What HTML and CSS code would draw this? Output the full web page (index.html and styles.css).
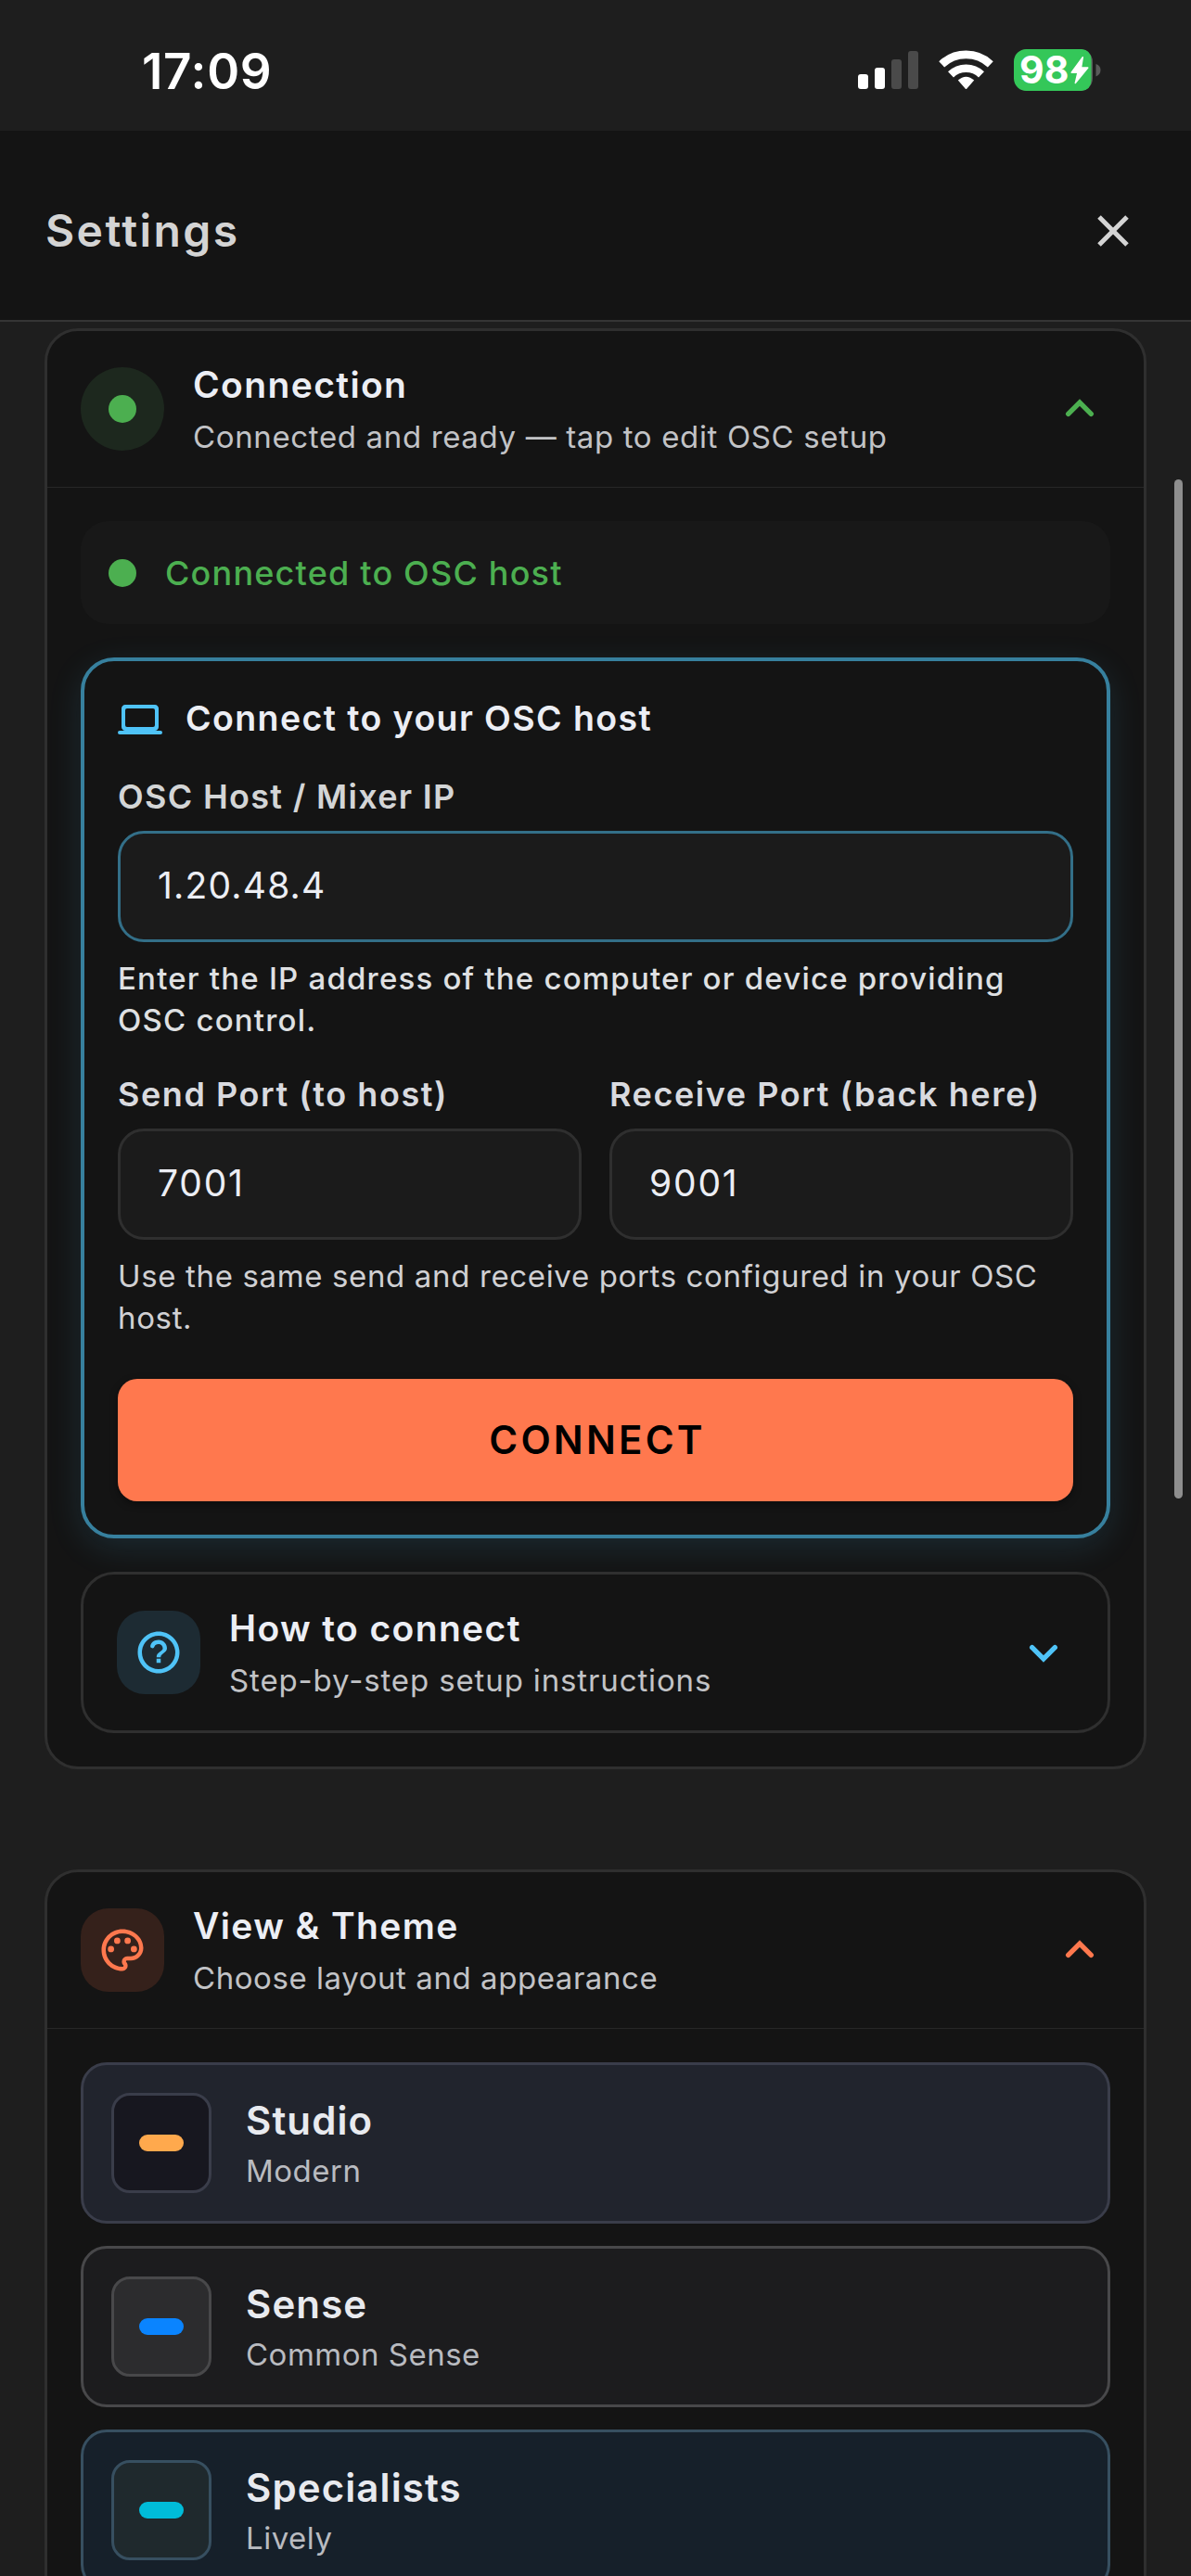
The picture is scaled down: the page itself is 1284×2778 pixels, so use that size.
FILE: index.html
```
<!DOCTYPE html>
<html lang="en">
<head>
    <meta charset="UTF-8">
    <meta name="viewport" content="width=device-width, initial-scale=1.0">
    <title>Settings</title>
    <link rel="stylesheet" href="styles.css">
</head>
<body>
    <div class="status-bar">
        <span class="time">17:09</span>
        <svg class="status-icons" width="270" height="60" viewBox="0 0 270 60">
            <!-- signal -->
            <rect x="5" y="35" width="11" height="16" rx="3" fill="#fff"/>
            <rect x="23" y="28" width="11" height="23" rx="3" fill="#fff"/>
            <rect x="41" y="19" width="11" height="32" rx="3" fill="#4a4a4a"/>
            <rect x="59" y="10" width="11" height="41" rx="3" fill="#4a4a4a"/>
            <!-- wifi -->
            <g fill="none" stroke="#fff">
                <path d="M95.2 24.3A38.5 38.5 0 0 1 147.8 24.3" stroke-width="8.6"/>
                <path d="M105 35.4A23.8 23.8 0 0 1 138 35.4" stroke-width="8.6"/>
            </g>
            <path d="M112.8 41.6Q121.5 34 130.2 41.6L122.4 50.4Q121.5 51.4 120.6 50.4Z" fill="#fff"/>
            <!-- battery -->
            <rect x="174" y="8" width="84" height="45" rx="13.5" fill="#5a5a5a"/>
            <path d="M187.5 8H246Q256 9 256.5 19V42Q256 52 246 53H187.5A13.5 13.5 0 0 1 173 39.5V21.5A13.5 13.5 0 0 1 187.5 8Z" fill="#34c759"/>
            <path d="M261.5 24Q266.5 25.5 266.5 30.5T261.5 37.5Z" fill="#5a5a5a"/>
            <text class="battery-text" x="179" y="45">98</text>
            <path d="M247.3 16.8L235.2 33.2H242L239.3 44.6L252.8 28H245.5Z" fill="#fff" stroke="#fff" stroke-width="1.5" stroke-linejoin="round"/>
        </svg>
    </div>

    <header class="header">
        <h1>Settings</h1>
        <svg class="close" width="36" height="36" viewBox="0 0 36 36">
            <path d="M3 3L33 33M33 3L3 33" stroke="#d4d4d4" stroke-width="5"/>
        </svg>
    </header>

    <main class="content">
        <section class="card">
            <div class="card-header">
                <div class="icon icon-round"><span class="dot"></span></div>
                <div class="card-text">
                    <h2>Connection</h2>
                    <p class="sub-connection">Connected and ready — tap to edit OSC setup</p>
                </div>
                <svg class="chevron green" width="66" height="66" viewBox="0 0 66 66"><path d="M20.7 38.3L33 26L45.3 38.3"/></svg>
            </div>
            <div class="card-body">
                <div class="status-row"><span class="dot"></span>Connected to OSC host</div>

                <div class="host-box">
                    <div class="host-title">
                        <svg width="48" height="48" viewBox="0 0 24 24" fill="#4fc3f7"><path d="M20 18c1.1 0 2-.9 2-2V6c0-1.1-.9-2-2-2H4c-1.1 0-2 .9-2 2v10c0 1.1.9 2 2 2H1a1 1 0 0 0 0 2h22a1 1 0 0 0 0-2h-3zM5 6h14a1 1 0 0 1 1 1v8a1 1 0 0 1-1 1H5a1 1 0 0 1-1-1V7a1 1 0 0 1 1-1z"/></svg>
                        <h3>Connect to your OSC host</h3>
                    </div>
                    <label class="label label-host">OSC Host / Mixer IP</label>
                    <div class="input input-active">1.20.48.4</div>
                    <p class="help help-strong">Enter the IP address of the computer or device providing OSC control.</p>
                    <div class="ports">
                        <div class="port">
                            <label class="label">Send Port (to host)</label>
                            <div class="input">7001</div>
                        </div>
                        <div class="port">
                            <label class="label">Receive Port (back here)</label>
                            <div class="input">9001</div>
                        </div>
                    </div>
                    <p class="help">Use the same send and receive ports configured in your OSC host.</p>
                    <div class="btn">CONNECT</div>
                </div>

                <div class="howto">
                    <div class="card-header">
                        <div class="icon icon-blue">
                            <svg width="54" height="54" viewBox="0 0 24 24" fill="#4fc3f7"><path d="M11 17h2v-2h-2v2zm1-15C6.48 2 2 6.48 2 12s4.48 10 10 10 10-4.48 10-10S17.52 2 12 2zm0 18c-4.41 0-8-3.59-8-8s3.59-8 8-8 8 3.59 8 8-3.59 8-8 8zm0-14c-2.21 0-3.6 1.3-3.9 2.7a.95.95 0 0 0 1.9.5c.3-.7.9-1.2 2-1.2s2 .9 2 2c0 1.6-3 1.7-3 4.3h2c0-1.9 3-2.1 3-4.3 0-2.210-1.790-4-4-4z"/></svg>
                        </div>
                        <div class="card-text">
                            <h2>How to connect</h2>
                            <p class="sub-howto">Step-by-step setup instructions</p>
                        </div>
                        <svg class="chevron blue" width="66" height="66" viewBox="0 0 66 66"><path d="M20.7 27.7L33 40L45.3 27.7"/></svg>
                    </div>
                </div>
            </div>
        </section>

        <section class="card">
            <div class="card-header">
                <div class="icon icon-orange">
                    <svg width="54" height="54" viewBox="0 0 24 24" fill="#ff784e"><path d="M12 22C6.49 22 2 17.51 2 12S6.49 2 12 2s10 4.04 10 9c0 3.31-2.69 6-6 6h-1.77c-.28 0-.5.22-.5.5 0 .12.05.23.13.33.41.47.64 1.06.64 1.67A2.5 2.5 0 0 1 12 22zm0-18c-4.41 0-8 3.59-8 8s3.59 8 8 8c.28 0 .5-.22.5-.5a.54.54 0 0 0-.14-.35c-.41-.46-.63-1.05-.63-1.65a2.5 2.5 0 0 1 2.5-2.5H16c2.21 0 4-1.79 4-4 0-3.86-3.59-7-8-7z"/><circle cx="6.5" cy="11.5" r="1.5"/><circle cx="9.5" cy="7.5" r="1.5"/><circle cx="14.5" cy="7.5" r="1.5"/><circle cx="17.5" cy="11.5" r="1.5"/></svg>
                </div>
                <div class="card-text">
                    <h2>View &amp; Theme</h2>
                    <p>Choose layout and appearance</p>
                </div>
                <svg class="chevron orange" width="66" height="66" viewBox="0 0 66 66"><path d="M20.7 38.3L33 26L45.3 38.3"/></svg>
            </div>
            <div class="card-body themes">
                <div class="theme theme-studio">
                    <div class="swatch"><span class="pill"></span></div>
                    <div class="theme-text">
                        <h3>Studio</h3>
                        <p>Modern</p>
                    </div>
                </div>
                <div class="theme theme-sense">
                    <div class="swatch"><span class="pill"></span></div>
                    <div class="theme-text">
                        <h3>Sense</h3>
                        <p>Common Sense</p>
                    </div>
                </div>
                <div class="theme theme-specialists">
                    <div class="swatch"><span class="pill"></span></div>
                    <div class="theme-text">
                        <h3>Specialists</h3>
                        <p>Lively</p>
                    </div>
                </div>
            </div>
        </section>
    </main>

    <div class="scrollbar"></div>
</body>
</html>
```
FILE: styles.css
```
* {
    box-sizing: border-box;
    margin: 0;
    padding: 0;
}
body {
    position: relative;
    width: 1284px;
    height: 2778px;
    overflow: hidden;
    background: #1e1e1e;
    color: #eceef4;
    font-family: Inter, "Liberation Sans", sans-serif;
}
.status-bar {
    display: flex;
    justify-content: space-between;
    height: 141px;
    padding: 45px 94px 0 153px;
}
.time {
    color: #fff;
    font-size: 53px;
    font-weight: 600;
    line-height: 64px;
    letter-spacing: 0.7px;
}
.battery-text {
    fill: #fff;
    font-size: 41px;
    font-weight: 700;
}
.header {
    display: flex;
    align-items: center;
    justify-content: space-between;
    height: 206px;
    padding: 12px 66px 0 49px;
    background: #141414;
    border-bottom: 2px solid #353535;
}
.header h1 {
    color: #d4d4d4;
    font-size: 48px;
    font-weight: 600;
    line-height: 60px;
    letter-spacing: 2.4px;
}
.content {
    display: flex;
    flex-direction: column;
    gap: 108px;
    padding: 7px 48px 0;
}
.card {
    flex: none;
    background: #141414;
    border: 3px solid #2f2f2f;
    border-radius: 36px;
}
.card-header {
    display: flex;
    align-items: center;
    gap: 31px;
    height: 168px;
    padding: 0 36px;
}
.icon {
    display: flex;
    align-items: center;
    justify-content: center;
    flex: none;
    width: 90px;
    height: 90px;
    border-radius: 30px;
}
.icon-round { background: #1d281e; border-radius: 50%; }
.icon-blue { background: #1d2b33; }
.icon-orange { background: #35211b; }
.dot {
    width: 30px;
    height: 30px;
    border-radius: 50%;
    background: #4caf50;
}
.card-text {
    flex: 1;
}
.card-text h2 {
    font-size: 39px;
    font-weight: 600;
    line-height: 52px;
    letter-spacing: 1.38px;
}
.card-text p {
    margin-top: 8px;
    color: #c2c3c6;
    font-size: 33px;
    line-height: 45px;
    letter-spacing: 0.56px;
}
.card-text .sub-connection { letter-spacing: 0.64px; }
.card-text .sub-howto { letter-spacing: 0.87px; }
.chevron {
    flex: none;
    fill: none;
    stroke-width: 5.4;
    stroke-linecap: round;
}
.green { stroke: #4caf50; }
.blue { stroke: #4fc3f7; }
.orange { stroke: #ff784e; }
.card-body {
    padding: 36px;
    border-top: 1px solid #272727;
}
.status-row {
    display: flex;
    align-items: center;
    gap: 31px;
    height: 111px;
    padding: 0 30px;
    border-radius: 30px;
    background: #181818;
    color: #4caf50;
    font-size: 36px;
    font-weight: 500;
    letter-spacing: 1.2px;
}
.host-box {
    margin-top: 36px;
    padding: 36px;
    background: #141414;
    border: 4px solid #37809e;
    border-radius: 36px;
    box-shadow: 0 10px 36px rgba(79, 195, 247, 0.13);
}
.host-title {
    display: flex;
    align-items: center;
    gap: 25px;
    height: 54px;
}
.host-title h3 {
    font-size: 37.5px;
    font-weight: 600;
    line-height: 50px;
    letter-spacing: 1.4px;
    padding-bottom: 2px;
}
.label {
    display: block;
    margin: 35px 0 15px;
    color: #d9dadf;
    font-size: 36px;
    font-weight: 600;
    line-height: 44px;
    letter-spacing: 1.55px;
}
.label-host {
    margin-top: 34px;
    color: #d3d5d6;
    letter-spacing: 1.3px;
}
.input {
    height: 120px;
    padding: 0 40px;
    background: #1b1b1b;
    border: 3px solid #2f2f2f;
    border-radius: 28px;
    font-size: 39px;
    line-height: 111px;
    letter-spacing: 1.8px;
}
.input-active {
    border-color: #336f88;
    letter-spacing: 1.2px;
}
.ports {
    display: grid;
    grid-template-columns: 1fr 1fr;
    gap: 30px;
}
.help {
    margin-top: 17px;
    color: #d0d0d3;
    font-size: 33px;
    line-height: 45px;
    letter-spacing: 0.64px;
}
.help-strong {
    color: #dfe0e2;
    font-weight: 500;
    letter-spacing: 1.2px;
}
.btn {
    height: 132px;
    margin-top: 43px;
    padding-left: 4px;
    background: #ff784e;
    border-radius: 21px;
    box-shadow: 0 3px 9px rgba(0, 0, 0, 0.4);
    color: #000;
    font-size: 42px;
    font-weight: 600;
    line-height: 132px;
    letter-spacing: 3.2px;
    text-align: center;
}
.howto {
    margin-top: 36px;
    background: #141414;
    border: 3px solid #2f2f2f;
    border-radius: 36px;
}
.themes {
    display: flex;
    flex-direction: column;
    gap: 24px;
    padding-top: 36px;
}
.theme {
    display: flex;
    align-items: center;
    gap: 37px;
    height: 174px;
    padding: 0 30px;
    border: 3px solid;
    border-radius: 28px;
}
.swatch {
    display: flex;
    align-items: center;
    justify-content: center;
    width: 108px;
    height: 108px;
    border: 3px solid;
    border-radius: 20px;
}
.pill {
    width: 48px;
    height: 18px;
    border-radius: 9px;
}
.theme-text {
    padding-top: 4px;
}
.theme-text h3 {
    color: #e8eaef;
    font-size: 42px;
    font-weight: 600;
    line-height: 48px;
    letter-spacing: 1.1px;
}
.theme-text p {
    margin-top: 8px;
    color: #b9bbc0;
    font-size: 33px;
    line-height: 44px;
    letter-spacing: 0.5px;
}
.theme-studio { background: #21242d; border-color: #3a3d4a; }
.theme-studio .swatch { background: #17171f; border-color: #3a3d4a; }
.theme-studio .pill { background: #ffa94d; }
.theme-sense { background: #1c1c1e; border-color: #48484a; }
.theme-sense .swatch { background: #2c2c2e; border-color: #48484a; }
.theme-sense .pill { background: #0a84ff; }
.theme-specialists { background: #16202a; border-color: #374f60; }
.theme-specialists .swatch { background: #1f292d; border-color: #374f60; }
.theme-specialists .pill { background: #00bcd9; }
.scrollbar {
    position: absolute;
    top: 517px;
    right: 9px;
    width: 9px;
    height: 1099px;
    border-radius: 5px;
    background: #8e8e8e;
}
```
